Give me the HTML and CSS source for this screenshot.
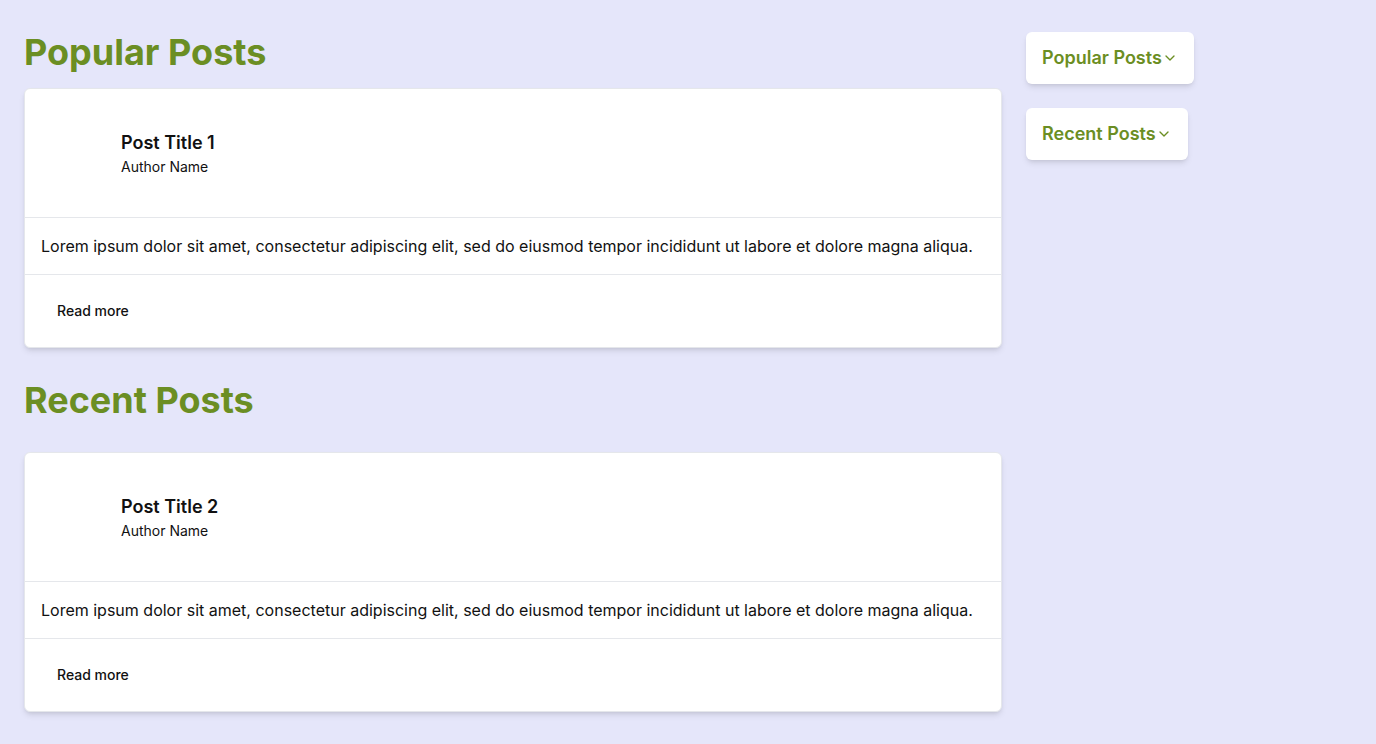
FILE: index.html
```
<!DOCTYPE html>
<html lang="en">
<head>
<meta charset="utf-8">
<meta name="viewport" content="width=device-width, initial-scale=1">
<title>Posts</title>
<link rel="stylesheet" href="styles.css">
</head>
<body>
<div class="layout">
  <main class="feed">
    <section class="section">
      <h1 class="heading">Popular Posts</h1>
      <article class="card">
        <header class="card-header">
          <div class="avatar"></div>
          <div>
            <h2 class="title">Post Title 1</h2>
            <p class="author">Author Name</p>
          </div>
        </header>
        <p class="content">Lorem ipsum dolor sit amet, consectetur adipiscing elit, sed do eiusmod tempor incididunt ut labore et dolore magna aliqua.</p>
        <footer class="card-footer"><button class="more" type="button">Read more</button></footer>
      </article>
    </section>
    <section class="section section-spaced">
      <h1 class="heading">Recent Posts</h1>
      <article class="card">
        <header class="card-header">
          <div class="avatar"></div>
          <div>
            <h2 class="title">Post Title 2</h2>
            <p class="author">Author Name</p>
          </div>
        </header>
        <p class="content">Lorem ipsum dolor sit amet, consectetur adipiscing elit, sed do eiusmod tempor incididunt ut labore et dolore magna aliqua.</p>
        <footer class="card-footer"><button class="more" type="button">Read more</button></footer>
      </article>
    </section>
  </main>
  <aside class="sidebar">
    <button class="toggle" type="button" aria-expanded="false">Popular Posts
      <svg class="chevron" viewBox="0 0 24 24" aria-hidden="true"><path d="M6 9l6 6 6-6"/></svg>
    </button>
    <button class="toggle" type="button" aria-expanded="false">Recent Posts
      <svg class="chevron" viewBox="0 0 24 24" aria-hidden="true"><path d="M6 9l6 6 6-6"/></svg>
    </button>
  </aside>
</div>
</body>
</html>
```
FILE: styles.css
```
*, *::before, *::after { box-sizing: border-box; }
body {
  margin: 0;
  min-height: 100vh;
  background: #e5e6fa;
  color: #111;
  font-family: Inter, "Liberation Sans", sans-serif;
  font-size: 16px;
  line-height: 24px;
}
h1, h2, p { margin: 0; }
.layout {
  display: grid;
  grid-template-columns: minmax(0, 3fr) minmax(0, 1fr);
  gap: 24px;
  padding: 32px 24px;
}
.feed { display: flex; flex-direction: column; gap: 32px; }
.section { display: flex; flex-direction: column; gap: 16px; }
.section-spaced { gap: 32px; }
.heading { color: #6b8e23; font-size: 36px; font-weight: 700; line-height: 40px; }
.card {
  background: #fff;
  border: 1px solid #e5e7eb;
  border-radius: 6px;
  box-shadow: 0 4px 6px -1px rgb(0 0 0 / 0.1), 0 2px 4px -2px rgb(0 0 0 / 0.1);
}
.card-header { display: flex; align-items: center; gap: 16px; padding: 32px 16px; }
.avatar { width: 64px; height: 64px; }
.title { font-size: 18px; font-weight: 600; line-height: 28px; }
.author { font-size: 14px; line-height: 20px; }
.content { padding: 16px; border-top: 1px solid #e5e7eb; border-bottom: 1px solid #e5e7eb; }
.card-footer { padding: 16px; }
.more {
  display: block;
  height: 40px;
  padding: 0 16px;
  border: 0;
  background: transparent;
  color: inherit;
  font: 500 14px/20px Inter, "Liberation Sans", sans-serif;
}
.sidebar { display: flex; flex-direction: column; align-items: flex-start; gap: 24px; }
.toggle {
  display: flex;
  align-items: center;
  padding: 12px 16px;
  border: 0;
  border-radius: 6px;
  background: #fff;
  color: #6b8e23;
  box-shadow: 0 4px 6px -1px rgb(0 0 0 / 0.1), 0 2px 4px -2px rgb(0 0 0 / 0.1);
  font: 600 18px/28px Inter, "Liberation Sans", sans-serif;
}
.chevron {
  width: 16px;
  height: 16px;
  fill: none;
  stroke: currentColor;
  stroke-width: 2;
  stroke-linecap: round;
  stroke-linejoin: round;
}
```
